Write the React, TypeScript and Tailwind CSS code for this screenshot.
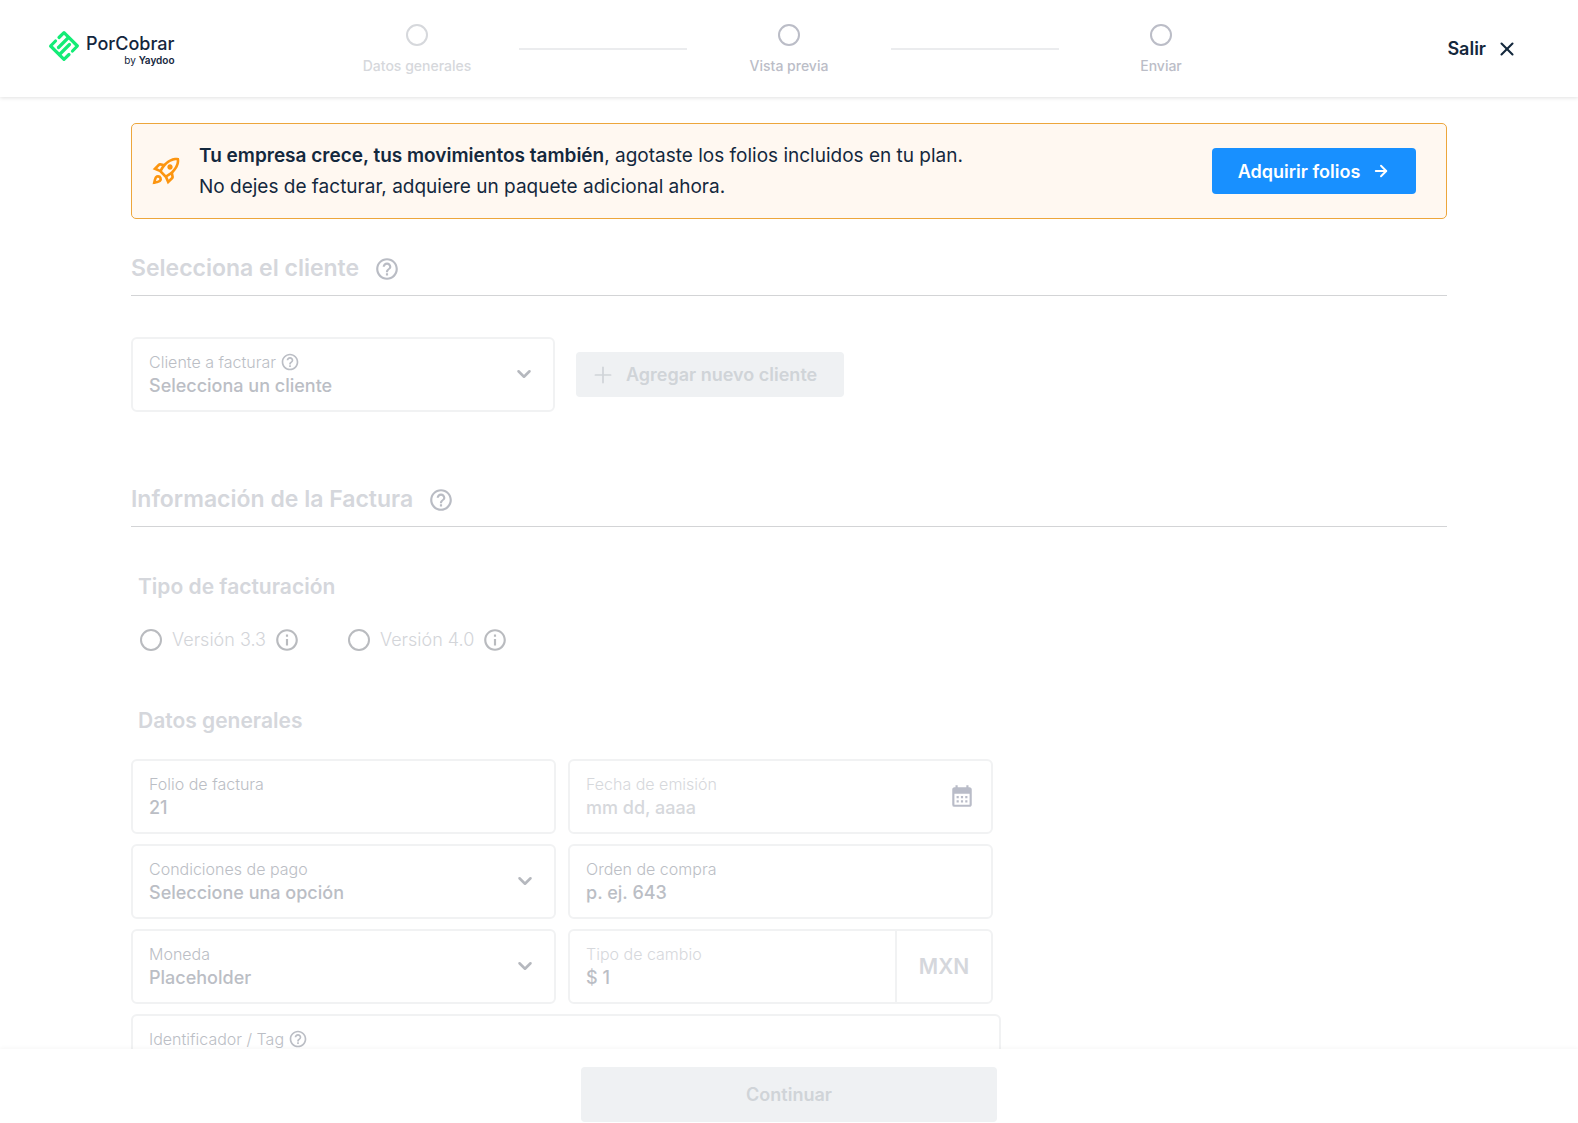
import { useId, useState } from "react";
import type { ReactNode } from "react";
import { ArrowRight, ChevronDown, Plus, X } from "lucide-react";
import { MdCalendarMonth, MdHelpOutline, MdInfoOutline, MdOutlineRocketLaunch } from "react-icons/md";

const fieldBox = "flex h-[75px] items-center rounded-md border-2 border-[#f1f2f3] bg-white px-4 pb-0.5";
const labelText = "flex items-center gap-1 text-[16px] leading-6 font-light";
const valueText = "w-full appearance-none bg-transparent text-[18px] leading-6 font-medium outline-none placeholder:text-current placeholder:opacity-100";

function Logo() {
  return (
    <a href="#inicio" aria-label="PorCobrar by Yaydoo" className="flex items-start gap-1.5 text-[#14263d]">
      <svg viewBox="0 0 32 32" className="size-8" fill="none" stroke="#13ec76" strokeWidth="3.2" strokeLinecap="round" strokeLinejoin="round">
        <path d="M11 7.500L16 2.600L29.400 16L24.500 21" />
        <path d="M21 24.500L16 29.400L2.600 16L7.500 11" />
        <path d="M20.500 7.500L10.500 17.500" />
        <path d="M11.500 24.500L21.500 14.500" />
      </svg>
      <span className="flex flex-col items-end pt-1">
        <span className="text-[18px] leading-5 font-medium">PorCobrar</span>
        <span className="text-[10px] leading-3">
          by <b className="font-semibold">Yaydoo</b>
        </span>
      </span>
    </a>
  );
}

function Step({ label, muted }: { label: string; muted?: boolean }) {
  return (
    <li className={`flex w-[204px] flex-col items-center gap-2 pt-1 ${muted ? "text-[#d6d8dc]" : "text-[#bbbdc7]"}`}>
      <span className="size-[22px] rounded-full border-2 border-current" />
      <span className="text-[14px] leading-6 font-medium">{label}</span>
    </li>
  );
}

function SectionTitle({ children }: { children: ReactNode }) {
  return (
    <h2 className="flex h-[54px] items-center gap-[15px] border-b border-[#d3d4d6] text-[23px] font-semibold text-[#d5d7dc]">
      {children}
      <MdHelpOutline className="size-[26px] text-[#b9bcc4]" />
    </h2>
  );
}

function TextField(props: { label: string; value?: string; placeholder?: string; muted?: boolean; icon?: ReactNode; help?: boolean }) {
  const id = useId();
  return (
    <div className={`${fieldBox} ${props.muted ? "text-[#d6d8dc]" : "text-[#bbbec5]"}`}>
      <div className="min-w-0 flex-1">
        <label htmlFor={id} className={labelText}>
          {props.label}
          {props.help && <MdHelpOutline className="size-5" />}
        </label>
        <input id={id} className={`${valueText} block`} defaultValue={props.value} placeholder={props.placeholder} />
      </div>
      {props.icon}
    </div>
  );
}

function SelectField({ label, option, help }: { label: string; option: string; help?: boolean }) {
  const id = useId();
  return (
    <div className={`${fieldBox} text-[#bbbec5]`}>
      <div className="min-w-0 flex-1">
        <label htmlFor={id} className={labelText}>
          {label}
          {help && <MdHelpOutline className="size-5" />}
        </label>
        <select id={id} className={`${valueText} block`}>
          <option>{option}</option>
        </select>
      </div>
      <ChevronDown className="pointer-events-none mr-0.5 size-[22px] text-[#b5b8be]" strokeWidth={2.8} />
    </div>
  );
}

function Version({ label, checked, onPick }: { label: string; checked: boolean; onPick: () => void }) {
  return (
    <div className="flex items-center gap-2">
      <label className="flex items-center gap-2.5 text-[18px] leading-6 font-light text-[#d3d5d9]">
        <input
          type="radio"
          name="version"
          checked={checked}
          onChange={onPick}
          className="size-[22px] appearance-none rounded-full border-2 border-[#b9bbbf] checked:border-[6px]"
        />
        {label}
      </label>
      <MdInfoOutline className="size-[26px] text-[#b9bbbf]" />
    </div>
  );
}

export default function App() {
  const [version, setVersion] = useState("");
  const amountId = useId();
  return (
    <div className="flex h-screen flex-col bg-white font-[Inter,'Open_Sans',sans-serif] text-[#14283d]">
      <header className="z-10 grid h-[97px] shrink-0 grid-cols-[1fr_auto_1fr] items-center shadow-[0_1px_4px_rgba(0,0,0,0.12)]">
        <div className="pb-0.5 pl-12">
          <Logo />
        </div>
        <ol className="flex items-center">
          <Step label="Datos generales" muted />
          <li aria-hidden="true" className="h-0.5 w-[168px] bg-[#ebecee]" />
          <Step label="Vista previa" />
          <li aria-hidden="true" className="h-0.5 w-[168px] bg-[#ebecee]" />
          <Step label="Enviar" />
        </ol>
        <button className="mr-[60px] flex items-center gap-2.5 justify-self-end text-[18px] font-semibold">
          Salir
          <X className="size-[22px]" strokeWidth={2.3} />
        </button>
      </header>

      <main className="min-h-0 flex-1 overflow-y-auto px-[131px] pt-[26px] [scrollbar-width:none]">
        <section className="flex h-24 items-center rounded-[5px] border border-[#eda63c] bg-[#fff8f1] pr-[30px] pl-[18px]">
          <MdOutlineRocketLaunch className="mr-[17px] size-8 shrink-0 text-[#fc9510]" />
          <p className="flex-1 text-[19px] leading-[31px]">
            <strong className="font-semibold">Tu empresa crece, tus movimientos también</strong>, agotaste los folios incluidos en tu plan.
            <br />
            No dejes de facturar, adquiere un paquete adicional ahora.
          </p>
          <button className="flex h-[46px] w-[204px] items-center justify-center gap-3 rounded bg-[#1890ff] text-[18px] font-semibold text-white">
            Adquirir folios
            <ArrowRight className="size-[18px]" strokeWidth={2.5} />
          </button>
        </section>

        <section className="mt-[23px]">
          <SectionTitle>Selecciona el cliente</SectionTitle>
          <div className="mt-[41px] flex items-center gap-[21px]">
            <div className="w-[424px]">
              <SelectField label="Cliente a facturar" option="Selecciona un cliente" help />
            </div>
            <button className="flex h-[45px] w-[268px] items-center gap-2.5 rounded bg-[#eff1f3] pl-3.5 text-[18px] font-semibold text-[#d0d4d8]">
              <Plus className="size-[26px]" strokeWidth={1.6} />
              Agregar nuevo cliente
            </button>
          </div>
        </section>

        <section className="mt-[61px]">
          <SectionTitle>Información de la Factura</SectionTitle>

          <h3 className="mt-[44px] pl-[7px] text-[21px] leading-8 font-semibold text-[#d5d7dc]">Tipo de facturación</h3>
          <div className="mt-6 flex gap-12 pl-[9px]">
            <Version label="Versión 3.3" checked={version === "3.3"} onPick={() => setVersion("3.3")} />
            <Version label="Versión 4.0" checked={version === "4.0"} onPick={() => setVersion("4.0")} />
          </div>

          <h3 className="mt-[52px] pl-[7px] text-[21px] leading-8 font-semibold text-[#d5d7dc]">Datos generales</h3>
          <div className="mt-[22px] grid w-[862px] grid-cols-2 gap-x-3 gap-y-2.5">
            <TextField label="Folio de factura" value="21" />
            <TextField
              label="Fecha de emisión"
              placeholder="mm dd, aaaa"
              muted
              icon={<MdCalendarMonth className="size-[26px] text-[#b9bcc8]" />}
            />
            <SelectField label="Condiciones de pago" option="Seleccione una opción" />
            <TextField label="Orden de compra" placeholder="p. ej. 643" />
            <SelectField label="Moneda" option="Placeholder" />
            <div className="flex h-[75px] items-stretch rounded-md border-2 border-[#f1f2f3] bg-white pl-4">
              <div className="min-w-0 flex-1 self-center pb-0.5">
                <label htmlFor={amountId} className={`${labelText} text-[#d6d8dc]`}>
                  Tipo de cambio
                </label>
                <input id={amountId} defaultValue="$ 1" className={`${valueText} block text-[#bbbec5]`} />
              </div>
              <span className="flex w-24 items-center justify-center border-l-2 border-[#f1f2f3] text-[21px] font-semibold text-[#d5d7dc]">
                MXN
              </span>
            </div>
          </div>
          <div className="mt-2.5 w-[870px]">
            <TextField label="Identificador / Tag" help />
          </div>
        </section>
      </main>

      <footer className="z-10 flex h-[74px] shrink-0 items-end justify-center bg-white pb-px shadow-[0_-1px_4px_rgba(0,0,0,0.04)]">
        <button className="h-[55px] w-[416px] rounded bg-[#eff1f3] text-[18px] font-semibold text-[#d0d4d8]">Continuar</button>
      </footer>
    </div>
  );
}
